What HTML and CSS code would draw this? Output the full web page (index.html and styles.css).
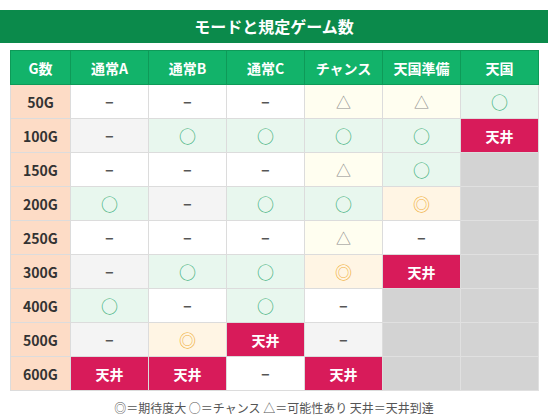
FILE: index.html
```html
<!DOCTYPE html>
<html lang="ja">
<head>
  <meta charset="UTF-8" />
  <title>モードと規定ゲーム数</title>
  <link rel="stylesheet" href="styles.css">
</head>
<body>
  <div class="title-bar">モードと規定ゲーム数</div>

  <table class="mode-table">
    <thead>
      <tr>
        <th class="col-g">G数</th>
        <th>通常A</th>
        <th>通常B</th>
        <th>通常C</th>
        <th>チャンス</th>
        <th>天国準備</th>
        <th>天国</th>
      </tr>
    </thead>
    <tbody>
      <tr>
        <td class="g">50G</td>
        <td class="no">−</td><td class="no">−</td><td class="no">−</td>
        <td class="tri">△</td><td class="tri">△</td><td class="ok">○</td>
      </tr>
      <tr>
        <td class="g">100G</td>
        <td class="no">−</td><td class="ok">○</td><td class="ok">○</td>
        <td class="ok">○</td><td class="ok">○</td><td class="top">天井</td>
      </tr>
      <tr>
        <td class="g">150G</td>
        <td class="no">−</td><td class="no">−</td><td class="no">−</td>
        <td class="tri">△</td><td class="ok">○</td><td class="off"></td>
      </tr>
      <tr>
        <td class="g">200G</td>
        <td class="ok">○</td><td class="no">−</td><td class="ok">○</td>
        <td class="ok">○</td><td class="big">◎</td><td class="off"></td>
      </tr>
      <tr>
        <td class="g">250G</td>
        <td class="no">−</td><td class="no">−</td><td class="no">−</td>
        <td class="tri">△</td><td class="no">−</td><td class="off"></td>
      </tr>
      <tr>
        <td class="g">300G</td>
        <td class="no">−</td><td class="ok">○</td><td class="ok">○</td>
        <td class="big">◎</td><td class="top">天井</td><td class="off"></td>
      </tr>
      <tr>
        <td class="g">400G</td>
        <td class="ok">○</td><td class="no">−</td><td class="ok">○</td>
        <td class="no">−</td><td class="off"></td><td class="off"></td>
      </tr>
      <tr>
        <td class="g">500G</td>
        <td class="no">−</td><td class="big">◎</td><td class="top">天井</td>
        <td class="no">−</td><td class="off"></td><td class="off"></td>
      </tr>
      <tr>
        <td class="g">600G</td>
        <td class="top">天井</td><td class="top">天井</td><td class="no">−</td>
        <td class="top">天井</td><td class="off"></td><td class="off"></td>
      </tr>
    </tbody>
  </table>

  <div class="legend">◎＝期待度大 ○＝チャンス △＝可能性あり 天井＝天井到達</div>
</body>
</html>
```

FILE: styles.css
```css
body {
  margin: 0;
  padding: 10px 0 0;
  font-family: 'Noto Sans CJK JP', 'Noto Sans', sans-serif;
  background: #fff;
  color: #333;
}

.title-bar {
  background-color: #0b8a4b;
  color: #fff;
  font-weight: bold;
  font-size: 16px;
  height: 33px;
  line-height: 33px;
  text-align: center;
}

.mode-table {
  margin: 7px 0 0 10px;
  border-collapse: collapse;
  table-layout: fixed;
  width: 529px;
}

.mode-table th,
.mode-table td {
  height: 34px;
  padding: 0;
  text-align: center;
  box-sizing: border-box;
}

.mode-table th {
  width: 78px;
  background-color: #12b36a;
  color: #fff;
  font-size: 14px;
  font-weight: bold;
  border: 1px solid #0e9a58;
}
.mode-table th.col-g {
  width: 60px;
}

.mode-table td {
  border: 1px solid #dcdcdc;
  background-color: #fff;
  font-size: 14px;
}

.mode-table td.g {
  background-color: #fddcc6;
  font-weight: bold;
  color: #333;
}

.mode-table td.no {
  color: #555;
  font-weight: bold;
}
/* 偶数行の「−」は薄いグレー */
.mode-table tbody tr:nth-child(even) td.no {
  background-color: #f4f4f4;
}

.mode-table td.ok {
  background-color: #e8f7ee;
  color: #3fb07c;
  font-size: 17px;
}

.mode-table td.tri {
  background-color: #fffef0;
  color: #8a8a8a;
  font-size: 15px;
}

.mode-table td.big {
  background-color: #fff5e4;
  color: #f0b040;
  font-size: 17px;
}

.mode-table td.top {
  background-color: #d81b5a;
  color: #fff;
  font-weight: bold;
}

.mode-table td.off {
  background-color: #d3d3d3;
  border-color: #e0e0e0;
}

.legend {
  margin-top: 8px;
  text-align: center;
  font-size: 12px;
  color: #555;
}
```
